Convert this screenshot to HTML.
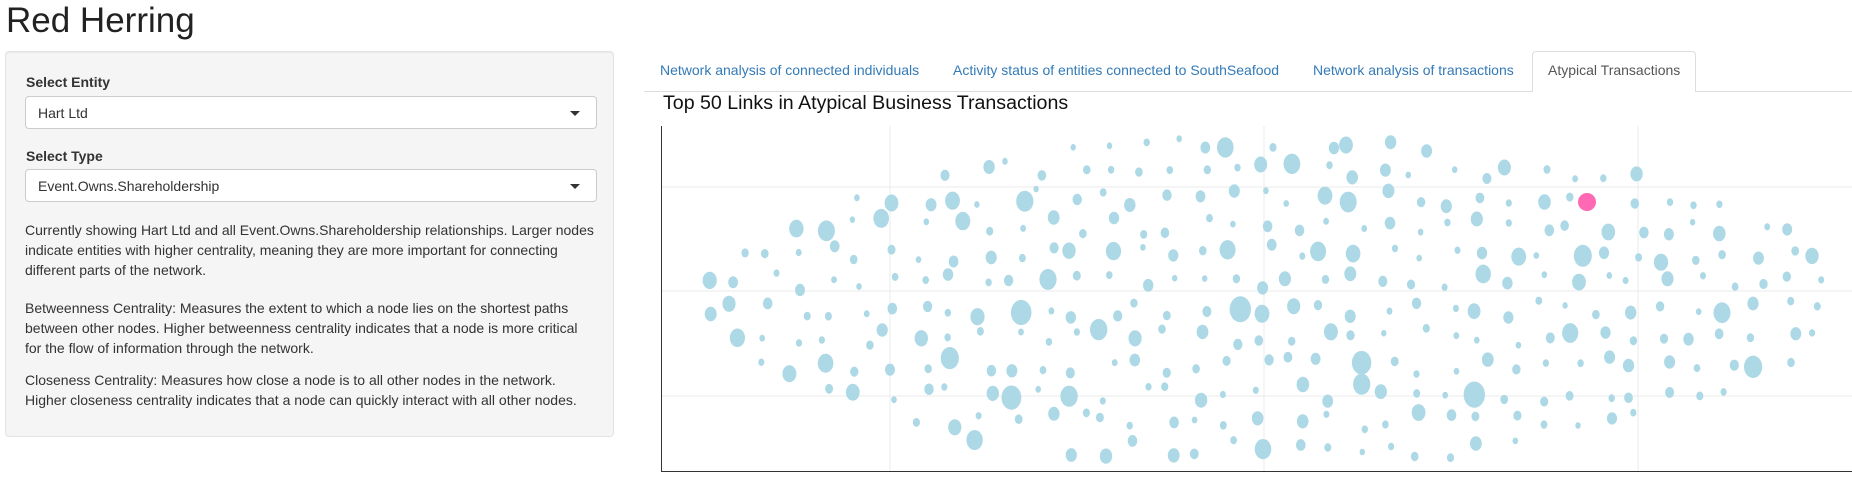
<!DOCTYPE html>
<html><head><meta charset="utf-8">
<style>
*{box-sizing:border-box}
body{margin:0;width:1852px;height:486px;overflow:hidden;background:#fff;font-family:"Liberation Sans",Arial,sans-serif;color:#333;font-size:14px;position:relative}
h1{position:absolute;left:6px;top:1px;margin:0;font-weight:400;font-size:35px;color:#222}
.side{position:absolute;left:5px;top:51px;width:609px;height:386px;background:#f5f5f5;border:1px solid #e3e3e3;border-radius:4px;box-shadow:inset 0 1px 1px rgba(0,0,0,.05)}
.lbl{position:absolute;left:20px;font-weight:700;font-size:14px}
.sel{position:absolute;left:19px;width:572px;height:33px;background:#fff;border:1px solid #ccc;border-radius:4px;padding:8px 12px;font-size:14px}
.sel:after{content:"";position:absolute;right:16px;top:14px;border-left:5px solid transparent;border-right:5px solid transparent;border-top:5px solid #333}
.p{position:absolute;left:19px;width:570px;line-height:20px;font-size:14px}
.tabs{position:absolute;left:644px;top:91px;width:1208px;border-top:1px solid #ddd}
.tab{position:absolute;top:62px;color:#337ab7;font-size:14px;white-space:nowrap}
.act{position:absolute;left:1532px;top:51px;width:164px;height:41px;background:#fff;border:1px solid #ddd;border-bottom:none;border-radius:4px 4px 0 0;color:#555;padding:10px 0 0 15px;font-size:14px;white-space:nowrap}
.ttl{position:absolute;left:663px;top:92px;font-size:19.6px;color:#111}
svg{position:absolute;left:661px;top:126px}
</style></head><body>
<h1>Red Herring</h1>
<div class="side">
<div class="lbl" style="top:22px">Select Entity</div>
<div class="sel" style="top:44px">Hart Ltd</div>
<div class="lbl" style="top:96px">Select Type</div>
<div class="sel" style="top:117px">Event.Owns.Shareholdership</div>
<div class="p" style="top:168px">Currently showing Hart Ltd and all Event.Owns.Shareholdership relationships. Larger nodes indicate entities with higher centrality, meaning they are more important for connecting different parts of the network.</div>
<div class="p" style="top:246px">Betweenness Centrality: Measures the extent to which a node lies on the shortest paths between other nodes. Higher betweenness centrality indicates that a node is more critical for the flow of information through the network.</div>
<div class="p" style="top:318px">Closeness Centrality: Measures how close a node is to all other nodes in the network.<br>Higher closeness centrality indicates that a node can quickly interact with all other nodes.</div>
</div>
<div class="tabs"></div>
<div class="tab" style="left:660px">Network analysis of connected individuals</div>
<div class="tab" style="left:953px">Activity status of entities connected to SouthSeafood</div>
<div class="tab" style="left:1313px">Network analysis of transactions</div>
<div class="act">Atypical Transactions</div>
<div class="ttl">Top 50 Links in Atypical Business Transactions</div>
<svg id="s" width="1191" height="346" viewBox="0 0 1191 346">
<g stroke="#ebebeb" stroke-width="1">
<line x1="0" y1="61" x2="1191" y2="61"/><line x1="0" y1="165" x2="1191" y2="165"/><line x1="0" y1="270" x2="1191" y2="270"/>
<line x1="229" y1="0" x2="229" y2="346"/><line x1="603" y1="0" x2="603" y2="346"/><line x1="977" y1="0" x2="977" y2="346"/>
</g>
<g id="c" fill="#add8e6"></g>
<circle cx="926" cy="76" r="9" fill="#ff69b4"/>
<line x1="0.5" y1="0" x2="0.5" y2="346" stroke="#333"/>
<line x1="0" y1="345.5" x2="1191" y2="345.5" stroke="#333"/>
</svg>
<script>
var seed=11;function r(){seed=(seed*16807)%2147483647;return seed/2147483647;}
var g=document.getElementById('c'),h='';
var cx=614,cy=175,rx=570,ry=165,sp=31;
for(var y=cy-ry+6;y<=cy+ry;y+=sp*0.9){for(var x=cx-rx;x<=cx+rx;x+=sp){
var px=x+(r()-.5)*20,py=y+(r()-.5)*18;
var dx=(px-cx)/rx,dy=(py-cy)/ry;if(dx*dx+dy*dy>1)continue;
if(Math.abs(px-926)<14&&Math.abs(py-76)<14)continue;
var rad=3+r()*r()*9;
h+='<ellipse cx="'+px.toFixed(1)+'" cy="'+py.toFixed(1)+'" rx="'+(rad*0.9).toFixed(1)+'" ry="'+(rad*1.1).toFixed(1)+'"/>';}}
g.innerHTML=h;
</script>
</body></html>
